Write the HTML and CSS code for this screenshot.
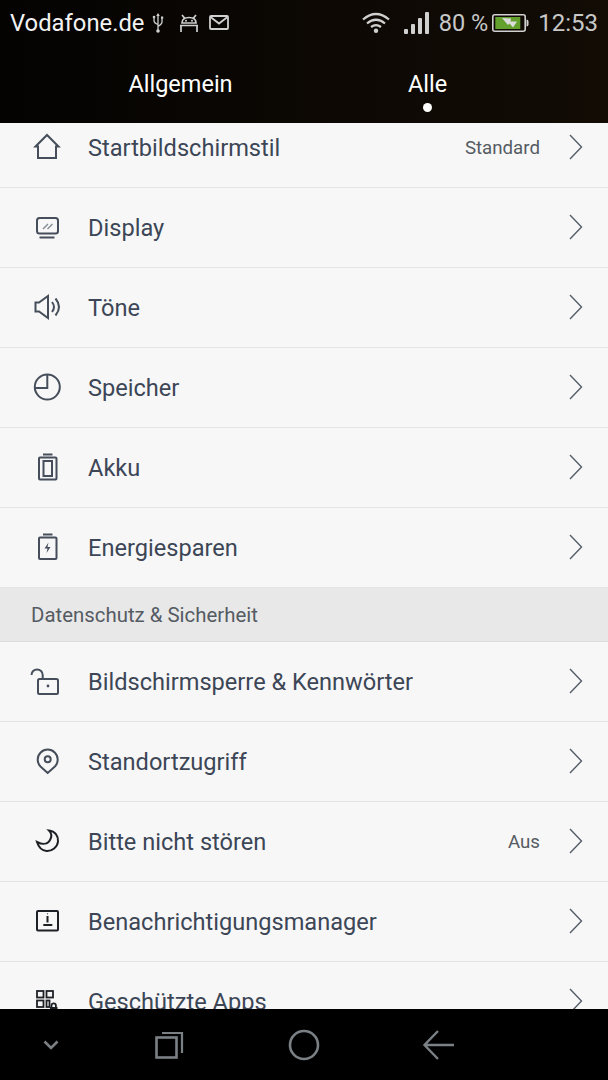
FILE: index.html
```html
<!DOCTYPE html>
<html>
<head>
    <title>Einstellungen</title>
    <link rel="stylesheet" href="styles.css">
</head>
<body>
    <div class="phone">
        <div class="header">
            <div class="status-bar">
                <div class="status-group">
                    <span class="carrier">Vodafone.de</span>
                    <svg class="usb-icon" width="12" height="20" viewBox="0 0 12 20"><path d="M6 1.500V19M2 4v3.500q0 2.500 4 4M10 5v4q0 2-4 4.500" fill="none" stroke="#d0d0d0" stroke-width="1.300"/><path d="M6 0l1.800 3H4.200z" fill="#d0d0d0"/><circle cx="2" cy="4" r="1.300" fill="#d0d0d0"/><rect x="9" y="3.500" width="2.200" height="2.200" fill="#d0d0d0"/><circle cx="6" cy="18" r="1.800" fill="#d0d0d0"/></svg>
                    <svg class="android-icon" width="20" height="18" viewBox="0 0 20 18"><path d="M3 1l2.500 3M17 1l-2.500 3M3 9q0-5.500 7-5.500T17 9zM1 11.500h18M2 11.500V18M18 11.500V18" fill="none" stroke="#d0d0d0" stroke-width="1.700"/><circle cx="7" cy="6.800" r="1" fill="#d0d0d0"/><circle cx="13" cy="6.800" r="1" fill="#d0d0d0"/></svg>
                    <svg class="mail-icon" width="20" height="15" viewBox="0 0 20 15"><rect x="1" y="1" width="18" height="13" rx="1" fill="none" stroke="#d0d0d0" stroke-width="1.800"/><path d="M1.500 2l8.500 6.500L18.500 2" fill="none" stroke="#d0d0d0" stroke-width="1.800"/></svg>
                </div>
                <div class="status-group">
                    <svg class="wifi-icon" width="28" height="21" viewBox="0 0 28 21"><path d="M1 7.500q13-11 26 0M5 11.500q9-7.500 18 0M9 15q5-3.800 10 0" fill="none" stroke="#d0d0d0" stroke-width="2.200"/><circle cx="14" cy="18.800" r="2.200" fill="#d0d0d0"/></svg>
                    <svg class="signal-icon" width="25" height="22" viewBox="0 0 25 22"><rect x="0" y="17" width="4" height="5" rx="1" fill="#d0d0d0"/><rect x="7" y="12" width="4" height="10" rx="1" fill="#d0d0d0"/><rect x="14" y="6" width="4" height="16" rx="1" fill="#d0d0d0"/><rect x="21" y="0" width="4" height="22" rx="1" fill="#d0d0d0"/></svg>
                    <span class="battery-text">80 %</span>
                    <svg class="battery-icon" width="37" height="18" viewBox="0 0 37 18"><rect x="0.800" y="0.800" width="32.400" height="16.400" rx="2" fill="none" stroke="#d0d0d0" stroke-width="1.600"/><rect x="3.300" y="3" width="25" height="12" fill="#64a02c"/><path d="M34.500 5.500q2 0 2 2v3q0 2-2 2z" fill="#d0d0d0"/><path d="M10 4l9 .5-.5 3H25l-4 6-3.500-4-1.500 1.500z" fill="#dcdcdc"/></svg>
                    <span class="clock">12:53</span>
                </div>
            </div>
            <div class="tabs">
                <div class="tab">Allgemein</div>
                <div class="tab tab-active">Alle<span class="tab-dot"></span></div>
            </div>
        </div>

        <div class="content">
            <div class="list">
                <div class="row">
                    <svg class="icon" viewBox="0 0 32 32"><path d="M4.500 15.500L16 4l11.500 11.500H25V27H7V15.500z"/></svg>
                    <span class="label">Startbildschirmstil</span>
                    <span class="value">Standard</span>
                    <svg class="chevron" viewBox="0 0 14 26"><path d="M1 1l11.500 12L1 25"/></svg>
                </div>
                <div class="row">
                    <svg class="icon" viewBox="0 0 32 32"><rect x="6" y="7" width="21" height="15.500" rx="2.500"/><path d="M8.500 26.500h15"/><path class="thin" d="M12 18l5-5M16.500 18l5-5"/></svg>
                    <span class="label">Display</span>
                    <svg class="chevron" viewBox="0 0 14 26"><path d="M1 1l11.500 12L1 25"/></svg>
                </div>
                <div class="row">
                    <svg class="icon" viewBox="0 0 32 32"><path d="M4.500 11.500h3.500L17 5v22l-9-6.500H4.500z"/><path d="M21 11q4 5 0 10M24.500 7.500q7 8.500 0 17"/></svg>
                    <span class="label">Töne</span>
                    <svg class="chevron" viewBox="0 0 14 26"><path d="M1 1l11.500 12L1 25"/></svg>
                </div>
                <div class="row">
                    <svg class="icon" viewBox="0 0 32 32"><circle cx="16.300" cy="16" r="12.500"/><path d="M16.300 4v13H4"/></svg>
                    <span class="label">Speicher</span>
                    <svg class="chevron" viewBox="0 0 14 26"><path d="M1 1l11.500 12L1 25"/></svg>
                </div>
                <div class="row">
                    <svg class="icon" viewBox="0 0 32 32"><rect x="8" y="6.500" width="17.500" height="22" rx="1"/><rect x="12.500" y="10" width="8.500" height="15"/><path d="M12 3.500h9.500"/></svg>
                    <span class="label">Akku</span>
                    <svg class="chevron" viewBox="0 0 14 26"><path d="M1 1l11.500 12L1 25"/></svg>
                </div>
                <div class="row">
                    <svg class="icon" viewBox="0 0 32 32"><rect x="8" y="6.500" width="17.500" height="21.500" rx="1"/><path d="M12 3.500h9.500"/><path class="solid" d="M17.500 11.500l-4 6h3l-1 4.500 4-6h-3z"/></svg>
                    <span class="label">Energiesparen</span>
                    <svg class="chevron" viewBox="0 0 14 26"><path d="M1 1l11.500 12L1 25"/></svg>
                </div>

                <div class="section">Datenschutz &amp; Sicherheit</div>

                <div class="row">
                    <svg class="icon" viewBox="0 0 32 32"><rect x="7" y="14" width="20" height="15" rx="1.500"/><path d="M0.500 10a5.600 5.600 0 0 1 11.200 0v4"/><circle class="solid" cx="17" cy="21" r="1.400"/></svg>
                    <span class="label">Bildschirmsperre &amp; Kennwörter</span>
                    <svg class="chevron" viewBox="0 0 14 26"><path d="M1 1l11.500 12L1 25"/></svg>
                </div>
                <div class="row">
                    <svg class="icon" viewBox="0 0 32 32"><path d="M16.700 28L9.500 21.500a10 10 0 1 1 14.400 0z"/><circle cx="16.700" cy="14.300" r="3"/></svg>
                    <span class="label">Standortzugriff</span>
                    <svg class="chevron" viewBox="0 0 14 26"><path d="M1 1l11.500 12L1 25"/></svg>
                </div>
                <div class="row">
                    <svg class="icon icon-dark" viewBox="0 0 32 32"><path d="M18 5.500C24 6 27.500 11 27 16.500 26.500 22 21 26.500 15.500 26 11 25.500 7.500 22 6 17c6 3 11 2 13-2 2-3.500 1.500-7-1-9.500z"/></svg>
                    <span class="label">Bitte nicht stören</span>
                    <span class="value">Aus</span>
                    <svg class="chevron" viewBox="0 0 14 26"><path d="M1 1l11.500 12L1 25"/></svg>
                </div>
                <div class="row">
                    <svg class="icon icon-dark" viewBox="0 0 32 32"><rect x="6" y="6" width="21" height="19.500" rx="1"/><path d="M12.300 20h9M16.500 11v6.500"/><circle class="solid" cx="16.500" cy="8.800" r="0.600"/></svg>
                    <span class="label">Benachrichtigungsmanager</span>
                    <svg class="chevron" viewBox="0 0 14 26"><path d="M1 1l11.500 12L1 25"/></svg>
                </div>
                <div class="row">
                    <svg class="icon icon-dark" viewBox="0 0 32 32"><rect class="thick" x="6" y="6" width="6.500" height="6.500"/><rect class="thick" x="15.500" y="6" width="6.500" height="6.500"/><rect class="thick" x="6" y="15.500" width="6.500" height="6.500"/><rect class="thick" x="15.500" y="15.500" width="3" height="6.500"/><rect class="solid" x="19" y="22" width="7.500" height="6"/><path class="thick" d="M20.500 22v-1.500a2.200 2.200 0 0 1 4.400 0V22"/></svg>
                    <span class="label">Geschützte Apps</span>
                    <svg class="chevron" viewBox="0 0 14 26"><path d="M1 1l11.500 12L1 25"/></svg>
                </div>
            </div>
        </div>

        <div class="nav-bar">
            <svg width="32" height="32" viewBox="0 0 32 32"><path d="M9.500 12.500l6.500 6.500 6.500-6.500" fill="none" stroke="#7b8085" stroke-width="2.600"/></svg>
            <svg width="32" height="32" viewBox="0 0 32 32"><rect x="3.500" y="8.500" width="20" height="20" fill="none" stroke="#7b8085" stroke-width="2.600"/><path d="M9 4h20v20" fill="none" stroke="#7b8085" stroke-width="2.200"/></svg>
            <svg width="32" height="32" viewBox="0 0 32 32"><circle cx="16" cy="16" r="14" fill="none" stroke="#7b8085" stroke-width="2.600"/></svg>
            <svg width="32" height="32" viewBox="0 0 32 32"><path d="M16 2L2.500 16 16 30M3 16h29" fill="none" stroke="#7b8085" stroke-width="2.400"/></svg>
        </div>
    </div>
</body>
</html>
```

FILE: styles.css
```css
html, body { margin: 0; padding: 0; background: #000; }
body { font-family: Roboto, "Liberation Sans", sans-serif; }
.phone { width: 608px; height: 1080px; display: flex; flex-direction: column; overflow: hidden; }

.header { height: 123px; box-sizing: border-box; background: linear-gradient(90deg, #040302 0%, #0b0703 45%, #120c05 100%); }
.status-bar { height: 45px; padding: 0 10px; display: flex; justify-content: space-between; align-items: center; }
.status-group { display: flex; align-items: center; }
.carrier { font-size: 23.800px; color: #f2f2f2; }
.usb-icon { margin-left: 8px; }
.android-icon { margin-left: 15px; }
.mail-icon { margin-left: 10px; }
.wifi-icon { margin-right: 14px; }
.signal-icon { margin-right: 10px; }
.battery-text { font-size: 23.500px; color: #c8c8c8; margin-right: 4px; }
.battery-icon { margin-right: 9px; }
.clock { font-size: 24px; color: #c8c8c8; }

.tabs { display: flex; padding: 0 57px; }
.tab { flex: 1; text-align: center; font-size: 23.500px; line-height: 32px; padding-top: 23px; color: #fff; position: relative; }
.tab-dot { position: absolute; left: 50%; top: 58px; width: 9px; height: 9px; margin-left: -4.500px; border-radius: 50%; background: #fff; }

.content { height: 886px; overflow: hidden; background: #f7f7f7; }
.list { margin-top: -15px; }
.row { height: 80px; box-sizing: border-box; display: flex; align-items: center; padding: 0 25px 0 31px; border-bottom: 1px solid #e4e4e4; }
.icon { width: 32px; height: 32px; flex: none; margin: 0 25px 1px 0; overflow: visible; fill: none; stroke: #454e5a; stroke-width: 2; }
.icon-dark { stroke: #1d2126; }
.icon .thin { stroke: #8a9099; stroke-width: 1.500; }
.icon .thick { stroke-width: 1.800; }
.icon .solid { fill: currentColor; stroke: none; color: #454e5a; }
.icon-dark .solid { color: #1d2126; }
.label { font-size: 23.600px; padding-top: 1px; color: #3c4656; }
.value { margin-left: auto; font-size: 18.700px; padding-top: 1px; color: #555b63; }
.chevron { width: 14px; height: 26px; flex: none; margin: 0 0 1px 29px; fill: none; stroke: #555d68; stroke-width: 1.400; }
.label + .chevron { margin-left: auto; }

.section { height: 54px; box-sizing: border-box; padding: 1px 0 0 31px; display: flex; align-items: center; font-size: 20.400px; color: #555b63; background: #e8e8e8; border-bottom: 1px solid #dcdcdc; }

.nav-bar { height: 71px; box-sizing: border-box; background: #000; display: grid; grid-template-columns: 118px 135px 134px 32px; align-items: center; padding-left: 35px; }
```
